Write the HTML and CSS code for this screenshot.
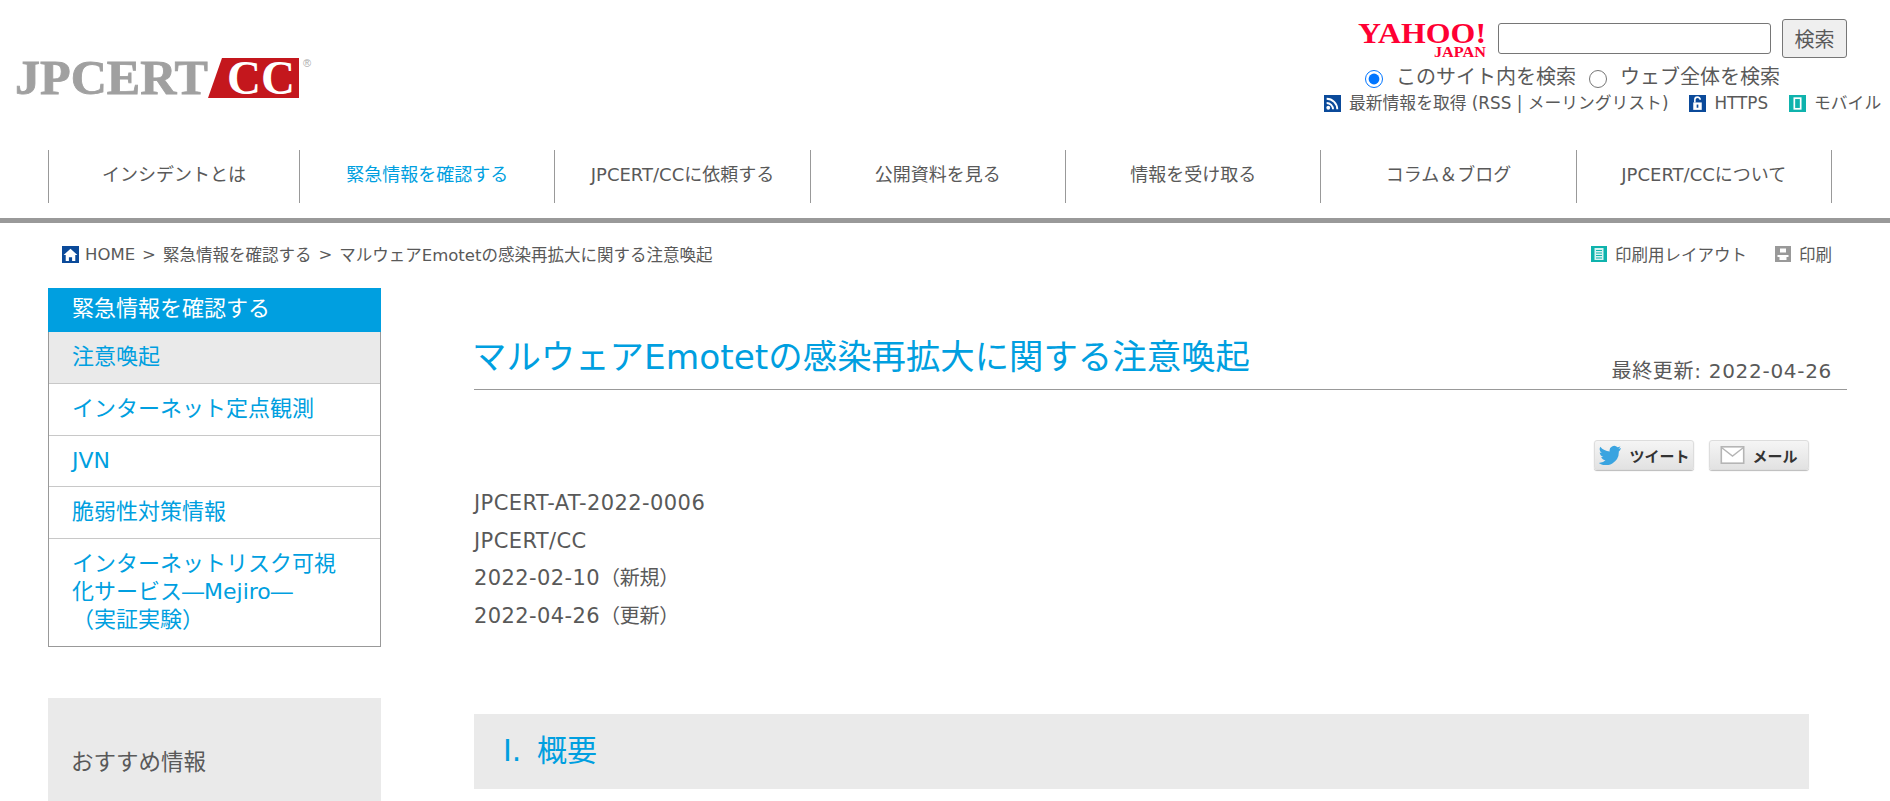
FILE: index.html
```html
<!DOCTYPE html>
<html lang="ja">
<head>
<meta charset="utf-8">
<title>マルウェアEmotetの感染再拡大に関する注意喚起</title>
<link rel="stylesheet" href="styles.css">
</head>
<body>
<header class="top">
  <a class="logo" href="#">
    <svg width="300" height="42" viewBox="0 0 300 42" role="img" aria-label="JPCERT/CC">
      <text x="0" y="36" class="logo-j" textLength="193" lengthAdjust="spacingAndGlyphs">JPCERT</text>
      <polygon points="207,0 284,0 284,40 193,40" fill="#c4171d"/>
      <text x="212" y="36" class="logo-c" textLength="68" lengthAdjust="spacingAndGlyphs">CC</text>
      <text x="288" y="9" class="logo-r">®</text>
    </svg>
  </a>
  <div class="tools">
    <form class="search">
      <svg class="yahoo" width="130" height="38" viewBox="0 0 130 38" role="img" aria-label="Yahoo! JAPAN">
        <text x="0" y="23" class="y-main" textLength="128" lengthAdjust="spacingAndGlyphs">YAHOO!</text>
        <text x="76" y="37" class="y-sub" textLength="52" lengthAdjust="spacingAndGlyphs">JAPAN</text>
      </svg>
      <input class="q" type="text">
      <button class="go" type="button">検索</button>
    </form>
    <div class="scope">
      <label class="scope-item"><input type="radio" name="s" checked>このサイト内を検索</label>
      <label class="scope-item"><input type="radio" name="s">ウェブ全体を検索</label>
    </div>
    <div class="feeds">
      <a class="feed" href="#"><svg class="ico" viewBox="0 0 16 16"><rect width="16" height="16" fill="#0b4a9a"/><circle cx="4" cy="12" r="1.8" fill="#fff"/><path d="M2.5 7.500a6 6 0 0 1 6 6M2.500 3.500a10 10 0 0 1 10 10" stroke="#fff" stroke-width="1.8" fill="none"/></svg>最新情報を取得 (RSS | メーリングリスト)</a>
      <a class="feed" href="#"><svg class="ico" viewBox="0 0 16 16"><rect width="16" height="16" fill="#0b4a9a"/><rect x="4" y="7" width="8" height="7" fill="#fff"/><path d="M5.500 7V4.500a2.500 2.500 0 0 1 5 0" stroke="#fff" stroke-width="1.5" fill="none"/><rect x="7.200" y="9" width="1.600" height="3" fill="#0b4a9a"/></svg>HTTPS</a>
      <a class="feed" href="#"><svg class="ico" viewBox="0 0 16 16"><rect width="16" height="16" fill="#0fb3ad"/><rect x="5" y="3" width="6" height="10" fill="none" stroke="#fff" stroke-width="1.6"/></svg>モバイル</a>
    </div>
  </div>
</header>

<nav class="gnav">
  <a href="#">インシデントとは</a>
  <a href="#" class="on">緊急情報を確認する</a>
  <a href="#">JPCERT/CCに依頼する</a>
  <a href="#">公開資料を見る</a>
  <a href="#">情報を受け取る</a>
  <a href="#">コラム＆ブログ</a>
  <a href="#">JPCERT/CCについて</a>
</nav>

<div class="crumbbar">
  <div class="crumbs">
    <svg class="ico" viewBox="0 0 16 16"><rect width="16" height="16" fill="#0b4a9a"/><path d="M8 2.500 1.500 8.500h2V14h3v-3.500h3V14h3V8.500h2z" fill="#fff"/></svg>
    <a href="#">HOME</a><span class="sep">&gt;</span><a href="#">緊急情報を確認する</a><span class="sep">&gt;</span><span>マルウェアEmotetの感染再拡大に関する注意喚起</span>
  </div>
  <div class="print">
    <a href="#" class="print-l"><svg class="ico" viewBox="0 0 16 16"><rect width="16" height="16" fill="#0fb3ad"/><rect x="3.500" y="2" width="9" height="12" fill="#d7f3f1"/><path d="M5 4.500h6M5 7h6M5 9.500h6M5 12h6" stroke="#0fb3ad" stroke-width="1.200"/></svg>印刷用レイアウト</a>
    <a href="#" class="print-l"><svg class="ico" viewBox="0 0 16 16"><rect width="16" height="16" fill="#999"/><rect x="5" y="2.500" width="6" height="4" fill="#fff"/><rect x="2.500" y="9" width="11" height="2" fill="#fff"/><rect x="4.500" y="11" width="7" height="3" fill="#fff"/></svg>印刷</a>
  </div>
</div>

<div class="layout">
  <aside class="side">
    <div class="box">
      <h2 class="box-h">緊急情報を確認する</h2>
      <ul class="box-list">
        <li class="cur"><a href="#">注意喚起</a></li>
        <li><a href="#">インターネット定点観測</a></li>
        <li><a href="#">JVN</a></li>
        <li><a href="#">脆弱性対策情報</a></li>
        <li><a href="#">インターネットリスク可視化サービス―Mejiro―<span class="keep">（実証実験）</span></a></li>
      </ul>
    </div>
    <div class="reco">おすすめ情報</div>
  </aside>
  <main class="main">
    <div class="title-row">
      <h1 class="title">マルウェアEmotetの感染再拡大に関する注意喚起</h1>
      <span class="updated">最終更新: 2022-04-26</span>
    </div>
    <div class="share">
      <a class="sbtn" href="#"><svg width="24" height="20" viewBox="0 0 24 20"><path d="M23 3c-.8.400-1.700.600-2.600.700.900-.600 1.600-1.400 2-2.500-.900.500-1.800.900-2.900 1.100A4.600 4.600 0 0 0 11.700 6.500C7.900 6.300 4.500 4.500 2.300 1.700 1 3.900 1.700 6.600 3.700 7.900c-.700 0-1.400-.200-2-.600 0 2.200 1.500 4.100 3.600 4.600-.700.200-1.400.200-2.100.100.600 1.900 2.300 3.200 4.300 3.200A9.300 9.300 0 0 1 .800 18.100 13 13 0 0 0 20.800 6.500c.900-.700 1.600-1.500 2.200-3.500z" fill="#3aa4e0"/></svg>ツイート</a>
      <a class="sbtn" href="#"><svg width="25" height="18" viewBox="0 0 24 18"><rect x=".8" y=".8" width="22.400" height="16.400" fill="#fff" stroke="#b5b5b5" stroke-width="1.600"/><path d="M1 1.500 12 10 23 1.500" fill="none" stroke="#b5b5b5" stroke-width="1.400"/></svg>メール</a>
    </div>
    <div class="meta">
      <p>JPCERT-AT-2022-0006</p>
      <p>JPCERT/CC</p>
      <p>2022-02-10<span class="ja">（新規）</span></p>
      <p>2022-04-26<span class="ja">（更新）</span></p>
    </div>
    <h2 class="sect">I. 概要</h2>
  </main>
</div>
</body>
</html>
```
FILE: styles.css
```css
* { box-sizing: border-box; }
html, body { height: 801px; overflow: hidden; }
body {
  margin: 0;
  background: #fff;
  color: #595959;
  font-family: "DejaVu Sans", "Noto Sans CJK JP", sans-serif;
  font-weight: 400;
  font-size: 16.500px;
}
a { color: inherit; text-decoration: none; }
.ico { width: 16px; height: 16px; flex: none; }

.top { display: flex; justify-content: space-between; height: 150px; padding-left: 15px; }
.logo { margin-top: 58px; height: 42px; }
.logo svg { overflow: visible; display: block; }
.logo-j { font: 700 48px "Liberation Serif", serif; fill: #a0a0a0; stroke: #a0a0a0; stroke-width: .8px; }
.logo-c { font: 700 48px "Liberation Serif", serif; fill: #fff; }
.logo-r { font: 400 11px "Liberation Sans", sans-serif; fill: #aaa; }

.tools { width: 572px; padding-top: 19px; flex: none; }
.search { display: flex; align-items: center; height: 39px; padding-left: 40px; }
.yahoo { margin-right: 10px; display: block; overflow: visible; }
.y-main { font: 700 29px "Liberation Serif", serif; fill: #ff0033; }
.y-sub { font: 700 15px "Liberation Serif", serif; fill: #ff0033; }
.q { width: 273px; height: 31px; border: 1px solid #767676; border-radius: 3px; background: #fff; margin-right: 11px; }
.go { width: 65px; height: 39px; border: 1px solid #767676; border-radius: 3px; background: #efefef; color: #595959; font: 400 20px "Noto Sans CJK JP", sans-serif; padding: 0; }
.scope { display: flex; height: 26px; margin-top: 6px; padding-left: 47px; font-size: 20px; line-height: 26px; }
.scope-item { display: flex; align-items: center; margin-right: 13px; white-space: nowrap; }
.scope-item input { width: 18px; height: 18px; margin: 3px 13px 0 0; }
.feeds { display: flex; height: 22px; margin-top: 2px; padding-left: 6px; font-size: 16.800px; line-height: 22px; white-space: nowrap; }
.feed { display: flex; align-items: center; margin-right: 21px; }
.feed .ico { width: 17px; height: 17px; margin-right: 8px; }

.gnav { display: flex; width: 1784px; height: 53px; margin-left: 48px; border-right: 1px solid #999; }
.gnav a { flex: 1; display: flex; align-items: center; justify-content: center; border-left: 1px solid #999; font-size: 18px; padding-bottom: 7px; }
.gnav a:first-child { flex: none; width: 251px; }
.gnav a.on { color: #009fe0; }

.crumbbar { display: flex; justify-content: space-between; align-items: flex-start; width: 1784px; height: 70px; margin: 15px 0 0 48px; padding: 0 0 0 14px; position: relative; }
.crumbbar::before { content: ""; position: absolute; left: -48px; top: 0; width: 1890px; height: 5px; background: #999; }
.crumbs { display: flex; align-items: center; padding-top: 24px; }
.crumbs .ico { width: 17px; height: 17px; margin-right: 6px; }
.sep { margin: 0 7px; }
.print { display: flex; padding-top: 24px; }
.print-l { display: flex; align-items: center; margin-left: 28px; }
.print-l .ico { margin-right: 8px; }

.layout { display: flex; margin-left: 48px; }
.side { width: 333px; flex: none; }
.box { border: 1px solid #999; border-top: 0; }
.box-h { margin: 0 -1px; height: 44px; padding-left: 24px; background: #009fe0; color: #fff; font-size: 22px; font-weight: 400; line-height: 42px; }
.box-list { list-style: none; margin: 0; padding: 0; }
.box-list li { border-top: 1px solid #c8c8c8; padding: 11px 40px 11px 23px; font-size: 22px; line-height: 28.400px; color: #009fe0; }
.box-list li:first-child { border-top: 0; padding-bottom: 12px; }
.box-list li:last-child { padding-bottom: 11px; }
.box-list .cur { background: #eaeaea; }
.keep { white-space: nowrap; }
.reco { height: 110px; margin-top: 51px; padding: 49px 0 0 23px; background: #eaeaea; font-size: 22.500px; line-height: 30px; }

.main { width: 1335px; margin-left: 93px; padding-top: 39px; }
.title-row { display: flex; justify-content: space-between; align-items: flex-end; width: 1373px; height: 63px; border-bottom: 1px solid #999; padding-right: 15px; }
.title { margin: 0 0 6px -2px; color: #009fe0; font-size: 34.400px; font-weight: 400; line-height: 52px; white-space: nowrap; }
.updated { font-size: 20px; line-height: 30px; padding-bottom: 3px; letter-spacing: .7px; white-space: nowrap; }
.share { display: flex; justify-content: flex-end; gap: 15px; margin-top: 50px; }
.sbtn { display: flex; align-items: center; justify-content: center; gap: 7px; width: 100px; height: 30px; border: 1px solid #ddd; border-radius: 3px; background: linear-gradient(#f5f5f5, #e2e2e2); color: #333; font-size: 15px; font-weight: 700; box-shadow: 0 1px 1px #bbb; }
.meta { margin-top: 15px; font-size: 21px; line-height: 37.600px; letter-spacing: .4px; font-weight: 400; }
.meta p { margin: 0; }
.ja { font-size: 20px; letter-spacing: -.3px; }
.sect { display: block; height: 75px; margin: 79px 0 0; padding-left: 29px; background: #eaeaea; color: #009fe0; font-size: 30px; font-weight: 400; line-height: 73px; word-spacing: 6px; }
```
